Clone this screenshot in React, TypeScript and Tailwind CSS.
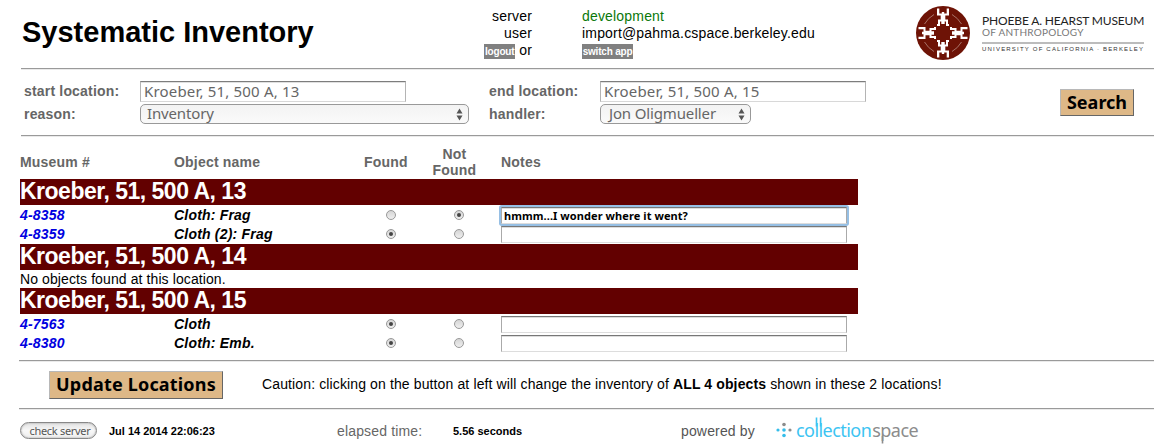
import type { ReactNode } from "react";

const Rule = ({ className = "" }: { className?: string }) => (
  <div className={`h-[2px] shrink-0 border-t border-b border-t-[#9a9a9a] border-b-[#eaeaea] ${className}`} />
);

const Arrows = () => (
  <svg width="7" height="13" viewBox="0 0 7 13" fill="#555" className="shrink-0">
    <path d="M3.5 0.5 6.5 5.5H0.500Z M3.5 12.500 0.500 7.500H6.500Z" />
  </svg>
);

const Label = ({ children }: { children: ReactNode }) => (
  <div className="text-[14px] font-bold tracking-[0.18px] whitespace-nowrap text-[#666]">{children}</div>
);

const TextField = ({ value }: { value: string }) => (
  <div className="flex h-[21px] w-[266px] items-center border border-t-[#7d7d7d] border-r-[#b4b4b4] border-b-[#d8d8d8] border-l-[#b4b4b4] bg-white pl-[3px] font-['Noto_Sans',sans-serif] text-[15px] leading-none tracking-[0.18px] whitespace-nowrap text-[#666] shadow-[inset_0_1px_0_#e0e0e0]">
    {value}
  </div>
);

const Select = ({ value, className }: { value: string; className: string }) => (
  <div
    className={`flex h-[20px] items-center justify-between rounded-[5px] border border-[#999] bg-gradient-to-b from-[#f3f3f3] to-[#fafafa] pr-[5px] font-['Noto_Sans',sans-serif] text-[15px] leading-none tracking-[-0.15px] whitespace-nowrap text-[#666] ${className}`}
  >
    <span className="pb-[2px]">{value}</span>
    <Arrows />
  </div>
);

const Radio = ({ on }: { on: boolean }) => (
  <div className="flex size-[10px] items-center justify-center rounded-full border border-[#999] bg-gradient-to-b from-[#d5d5d5] to-[#efefef]">
    {on && <div className="size-[4px] rounded-full bg-[#444]" />}
  </div>
);

const Band = ({ children }: { children: string }) => (
  <div className="flex h-[26px] w-[838px] items-center bg-[#620000] pb-px text-[23px] leading-none font-bold tracking-[-0.5px] whitespace-nowrap text-white">
    {children}
  </div>
);

type RowProps = { id: string; name: string; found: boolean; note?: string; focused?: boolean };

const Row = ({ id, name, found, note = "", focused = false }: RowProps) => (
  <div className="flex h-[19px] items-center text-[14px] leading-none font-bold tracking-[0.2px] whitespace-nowrap italic">
    <a className="w-[154px] pb-px text-[#0000e0]">{id}</a>
    <div className="w-[212px] pb-px">{name}</div>
    <div className="w-[68px] pb-px"><Radio on={found} /></div>
    <div className="w-[47px] pb-px"><Radio on={!found} /></div>
    <div
      className={`flex h-[17px] w-[346px] items-center border border-t-[#777] border-r-[#aaa] border-b-[#ddd] border-l-[#aaa] bg-white pl-[2px] font-['Noto_Sans',sans-serif] text-[11px] leading-none font-bold tracking-[0.07px] text-black not-italic shadow-[inset_0_1px_0_#ddd] ${focused ? "z-10 rounded-[1px] ring-2 ring-[#96bfe4]" : ""}`}
    >
      {note}
    </div>
  </div>
);

const Figure = ({ turn }: { turn: number }) => (
  <g transform={`rotate(${turn} 27 27)`}>
    <path d="M21 2.500h2.300v5h2.500v-1.500h2.400v1.500h2.500v-5H33v7h-3.700v4h2.700v4.500h1v2h-3v-4.500h-1.300v2.500h-3.400v-2.500H24v4.500h-3v-2h1v-4.500h2.700v-4H21Z" />
  </g>
);

const Seal = () => (
  <svg width="54" height="54" viewBox="0 0 54 54" className="shrink-0">
    <circle cx="27" cy="27" r="27" fill="#6e1306" />
    <g fill="none" stroke="#b58a80" strokeWidth="0.8">
      <path d="M8.500 18Q12 12 18 8.500M36 8.500Q42 12 45.500 18M45.500 36Q42 42 36 45.500M18 45.500Q12 42 8.500 36" />
    </g>
    <g fill="#fff">
      <Figure turn={0} />
      <Figure turn={90} />
      <Figure turn={180} />
      <Figure turn={270} />
    </g>
  </svg>
);

const Dots = () => (
  <svg width="16" height="16" viewBox="0 0 16 16" className="shrink-0">
    <g fill="#35bdea">
      <circle cx="2" cy="8" r="1.600" />
      <circle cx="8" cy="8" r="1.800" />
      <circle cx="8" cy="13.500" r="1.800" />
    </g>
    <g fill="#8c8c8c">
      <circle cx="8" cy="2.500" r="1.800" />
      <circle cx="14" cy="8" r="1.600" />
    </g>
  </svg>
);

export default function App() {
  return (
    <div className="h-[447px] w-[1174px] overflow-hidden bg-white font-['Liberation_Sans',Arial,sans-serif] text-black">
      <header className="flex h-[68px]">
        <h1 className="w-[450px] pt-[16px] pl-[22px] text-[29px] leading-[32px] font-bold whitespace-nowrap">
          Systematic Inventory
        </h1>
        <div className="grid w-[466px] grid-cols-[82px_1fr] grid-rows-[17px_17px_17px] gap-x-[50px] pt-[8px] text-[14px] leading-[17px] tracking-[0.18px] whitespace-nowrap">
          <div className="text-right">server</div>
          <div className="text-[#0a780a]">development</div>
          <div className="text-right">user</div>
          <div>import@pahma.cspace.berkeley.edu</div>
          <div className="flex justify-end gap-[4px]">
            <span className="mt-[2px] flex h-[15px] w-[31px] items-center justify-center bg-[#808080] text-[10px] font-bold tracking-[-0.2px] text-white">logout</span>
            <span>or</span>
          </div>
          <span className="mt-[2px] flex h-[15px] w-[51px] items-center justify-center bg-[#808080] text-[10px] font-bold tracking-[-0.2px] text-white">switch app</span>
        </div>
        <div className="flex pt-[6px]">
          <Seal />
          <div className="pt-[8px] pl-[12px] font-[Lato,sans-serif] whitespace-nowrap">
            <div className="text-[12px] leading-[13px] tracking-[-0.15px] text-[#222]">PHOEBE A. HEARST MUSEUM</div>
            <div className="text-[10px] leading-[11px] tracking-[0.25px] text-[#777]">OF ANTHROPOLOGY</div>
            <div className="mt-[4px] h-[2px] w-[162px] bg-[#bcbcbc]" />
            <div className="pt-[2px] font-['Liberation_Sans',sans-serif] text-[6px] leading-[7px] tracking-[1.2px] text-[#333]">UNIVERSITY OF CALIFORNIA · BERKELEY</div>
          </div>
        </div>
      </header>
      <Rule className="ml-[21px] w-[1133px]" />
      <section className="flex h-[65px] pl-[24px]">
        <div className="grid grid-cols-[116px_349px_111px_460px] grid-rows-[21px_20px] items-center gap-y-[2px] pt-[11px]">
          <Label>start location:</Label>
          <TextField value="Kroeber, 51, 500 A, 13" />
          <Label>end location:</Label>
          <TextField value="Kroeber, 51, 500 A, 15" />
          <Label>reason:</Label>
          <Select value="Inventory" className="w-[329px] pl-[6px]" />
          <Label>handler:</Label>
          <Select value="Jon Oligmueller" className="w-[151px] pl-[8px]" />
        </div>
        <button className="mt-[19px] flex h-[27px] w-[74px] items-center justify-center border border-t-[#b8b8b8] border-r-[#666] border-b-[#666] border-l-[#b8b8b8] bg-[#deb887] pb-[2px] font-['Noto_Sans',sans-serif] text-[18px] leading-none font-bold">
          Search
        </button>
      </section>
      <Rule className="ml-[21px] w-[1133px]" />
      <main className="h-[223px] pl-[20px]">
        <div className="flex h-[42px] items-center pt-[8px] text-[14px] leading-[16px] font-bold tracking-[0.2px] whitespace-nowrap text-[#666]">
          <div className="w-[154px]">Museum #</div>
          <div className="w-[190px]">Object name</div>
          <div className="w-[68px]">Found</div>
          <div className="w-[45px] text-center">Not<br />Found</div>
          <div className="pl-[24px]">Notes</div>
        </div>
        <Band>Kroeber, 51, 500 A, 13</Band>
        <div className="h-[39px] pt-px">
          <Row id="4-8358" name="Cloth: Frag" found={false} note="hmmm...I wonder where it went?" focused />
          <Row id="4-8359" name="Cloth (2): Frag" found />
        </div>
        <Band>Kroeber, 51, 500 A, 14</Band>
        <div className="h-[18px] text-[14px] leading-[19px] tracking-[0.1px] whitespace-nowrap">No objects found at this location.</div>
        <Band>Kroeber, 51, 500 A, 15</Band>
        <div className="pt-px">
          <Row id="4-7563" name="Cloth" found />
          <Row id="4-8380" name="Cloth: Emb." found />
        </div>
      </main>
      <Rule className="ml-[19px] w-[1135px]" />
      <section className="flex h-[46px] pt-[9px] pl-[49px]">
        <button className="flex h-[28px] w-[174px] items-center justify-center border border-t-[#b8b8b8] border-r-[#666] border-b-[#666] border-l-[#b8b8b8] bg-[#deb887] pb-[2px] font-['Noto_Sans',sans-serif] text-[18px] leading-none font-bold tracking-[0.18px] whitespace-nowrap">
          Update Locations
        </button>
        <div className="pt-[5px] pl-[39px] text-[14px] leading-[17px] tracking-[0.125px] whitespace-nowrap">
          Caution: clicking on the button at left will change the inventory of <b>ALL 4 objects</b> shown in these 2 locations!
        </div>
      </section>
      <Rule className="ml-[19px] w-[1135px]" />
      <footer className="flex h-[37px] pl-[20px] whitespace-nowrap">
        <button className="mt-[12px] flex h-[17px] w-[77px] items-center justify-center rounded-full border border-[#888] bg-gradient-to-b from-[#e2e2e2] via-[#f8f8f8] to-[#eee] pl-[3px] font-['Noto_Sans',sans-serif] text-[11px] leading-none tracking-[-0.3px] text-[#555] shadow-[inset_0_0_2px_#999]">
          check server
        </button>
        <div className="w-[240px] pt-[15px] pl-[12px] text-[11px] leading-[13px] font-bold">Jul 14 2014 22:06:23</div>
        <div className="w-[116px] pt-[13px] text-[14px] leading-[17px] tracking-[0.15px] text-[#666]">elapsed time:</div>
        <div className="w-[228px] pt-[15px] text-[11px] leading-[13px] font-bold">5.56 seconds</div>
        <div className="w-[95px] pt-[13px] text-[14px] leading-[17px] tracking-[0.15px] text-[#555]">powered by</div>
        <div className="flex pt-[12px]">
          <Dots />
          <div className="relative -mt-[4px] pl-[4px] font-['Noto_Sans',sans-serif] text-[18px] leading-[24px]">
            <span className="tracking-[-0.55px] text-[#3cc4f2]">collection</span>
            <span className="ml-[1px] tracking-[-0.55px] text-[#8c8c8c]">space</span>
            <svg width="126" height="33" viewBox="0 0 126 33" className="absolute top-[-4px] left-0" fill="none" strokeWidth="1.600">
              <path d="M24.500 3.500v9M28.600 3.500v9" stroke="#3cc4f2" />
              <path d="M90.500 22v7.500" stroke="#8c8c8c" />
            </svg>
          </div>
        </div>
      </footer>
    </div>
  );
}
